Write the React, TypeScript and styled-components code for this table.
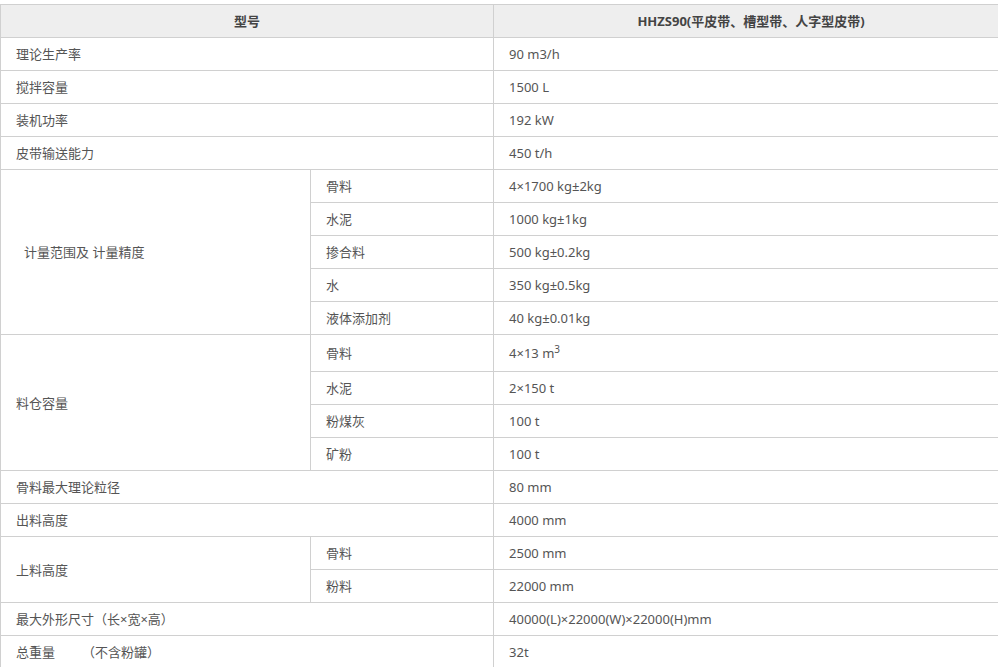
import React from "react";
import styled, { createGlobalStyle } from "styled-components";

const GlobalStyle = createGlobalStyle`
  html, body {
    margin: 0;
    padding: 0;
    background: #ffffff;
    overflow: hidden;
  }
  body {
    font-family: "Noto Sans", "Noto Sans CJK SC", sans-serif;
  }
`;

const Page = styled.div`
  padding-top: 4px;
  width: 1008px;
`;

const SpecTable = styled.table`
  width: 1008px;
  border-collapse: collapse;
  table-layout: fixed;
  border: 1px solid #d0d0d0;
  font-family: "Noto Sans", "Noto Sans CJK SC", sans-serif;
  font-size: 13px;
  color: #555555;
`;

const HeadCell = styled.th`
  background: #eeeeee;
  border: 1px solid #d0d0d0;
  height: 32px;
  padding: 0;
  line-height: 32px;
  font-weight: bold;
  font-size: 13px;
  color: #444444;
  text-align: center;
`;

const Cell = styled.td<{ $indent?: number; $height?: number }>`
  border: 1px solid #d0d0d0;
  height: ${(p) => p.$height ?? 32}px;
  padding: 0 0 0 ${(p) => 15 + (p.$indent ?? 0)}px;
  line-height: 32px;
  vertical-align: middle;
  white-space: nowrap;
  text-align: left;
`;

const Sup = styled.sup`
  font-size: 10px;
  line-height: 0;
`;

type Item = { name: string; value: React.ReactNode; height?: number };

type Row =
  | { kind: "single"; label: string; value: React.ReactNode }
  | { kind: "group"; label: string; indent?: number; items: Item[] };

const rows: Row[] = [
  { kind: "single", label: "理论生产率", value: "90 m3/h" },
  { kind: "single", label: "搅拌容量", value: "1500 L" },
  { kind: "single", label: "装机功率", value: "192 kW" },
  { kind: "single", label: "皮带输送能力", value: "450 t/h" },
  {
    kind: "group",
    label: "计量范围及 计量精度",
    indent: 8,
    items: [
      { name: "骨料", value: "4×1700 kg±2kg" },
      { name: "水泥", value: "1000 kg±1kg" },
      { name: "掺合料", value: "500 kg±0.2kg" },
      { name: "水", value: "350 kg±0.5kg" },
      { name: "液体添加剂", value: "40 kg±0.01kg" },
    ],
  },
  {
    kind: "group",
    label: "料仓容量",
    items: [
      {
        name: "骨料",
        height: 36,
        value: (
          <>
            4×13 m<Sup>3</Sup>
          </>
        ),
      },
      { name: "水泥", value: "2×150 t" },
      { name: "粉煤灰", value: "100 t" },
      { name: "矿粉", value: "100 t" },
    ],
  },
  { kind: "single", label: "骨料最大理论粒径", value: "80 mm" },
  { kind: "single", label: "出料高度", value: "4000 mm" },
  {
    kind: "group",
    label: "上料高度",
    items: [
      { name: "骨料", value: "2500 mm" },
      { name: "粉料", value: "22000 mm" },
    ],
  },
  {
    kind: "single",
    label: "最大外形尺寸（长×宽×高）",
    value: "40000(L)×22000(W)×22000(H)mm",
  },
  {
    kind: "single",
    label: "总重量\u00a0\u00a0\u00a0\u00a0\u00a0\u00a0\u00a0\u00a0（不含粉罐）",
    value: "32t",
  },
];

export default function App() {
  return (
    <>
      <GlobalStyle />
      <Page>
        <SpecTable>
          <colgroup>
            <col style={{ width: 310 }} />
            <col style={{ width: 183 }} />
            <col style={{ width: 515 }} />
          </colgroup>
          <thead>
            <tr>
              <HeadCell colSpan={2}>型号</HeadCell>
              <HeadCell>HHZS90(平皮带、槽型带、人字型皮带)</HeadCell>
            </tr>
          </thead>
          <tbody>
            {rows.map((row, i) =>
              row.kind === "single" ? (
                <tr key={i}>
                  <Cell colSpan={2}>{row.label}</Cell>
                  <Cell>{row.value}</Cell>
                </tr>
              ) : (
                row.items.map((item, j) => (
                  <tr key={`${i}-${j}`}>
                    {j === 0 && (
                      <Cell rowSpan={row.items.length} $indent={row.indent}>
                        {row.label}
                      </Cell>
                    )}
                    <Cell $height={item.height}>{item.name}</Cell>
                    <Cell $height={item.height}>{item.value}</Cell>
                  </tr>
                ))
              )
            )}
          </tbody>
        </SpecTable>
      </Page>
    </>
  );
}
